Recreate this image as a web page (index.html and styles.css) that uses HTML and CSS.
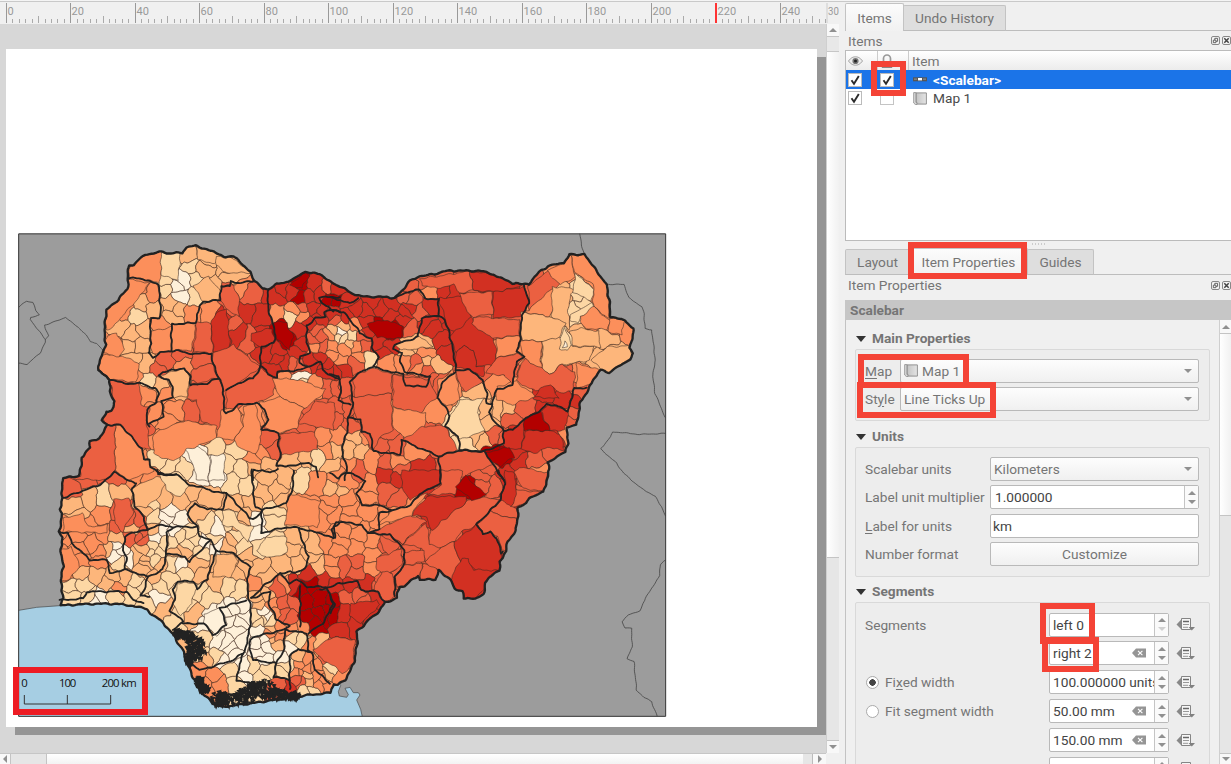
FILE: index.html
```html
<!DOCTYPE html>
<html lang="en">
<head>
<meta charset="utf-8">
<title>Layout</title>
<link rel="stylesheet" href="styles.css">
</head>
<body>
<svg width="0" height="0" class="defs" aria-hidden="true">
  <defs>
    <linearGradient id="paperGrad" x1="0" x2="1"><stop offset="0" stop-color="#c4c4c4"/><stop offset="1" stop-color="#e4e4e4"/></linearGradient>
    <symbol id="i-check" viewBox="0 0 14 14"><rect x=".5" y=".5" width="13" height="13" fill="#fff" stroke="#bbb"/><path d="M3.5 7.2 6 10.7 10.8 3" fill="none" stroke="#2b2b2b" stroke-width="1.9"/></symbol>
    <symbol id="i-box" viewBox="0 0 14 14"><rect x=".5" y=".5" width="13" height="13" fill="#fff" stroke="#c4c4c4"/></symbol>
    <symbol id="i-paper" viewBox="0 0 14 13"><path d="M3 .9h10.4v11.2H3z" fill="url(#paperGrad)" stroke="#888" stroke-width=".9"/><path d="M.7.6h2.2v9.8H4v2H2.2L.7 11z" fill="#ddd" stroke="#888" stroke-width=".8"/></symbol>
    <symbol id="i-scale" viewBox="0 0 14 5"><path d="M0 .3h14v4H0z" fill="#555"/><path d="M5 1h4v2.4H5z" fill="#fff"/><path d="M1 1.4h3v1.4H1zM10 1.4h3v1.4h-3z" fill="#8a8a8a"/></symbol>
    <symbol id="i-over" viewBox="0 0 20 15"><path d="M5.500 2.200.500 7.400l5 5.200z" fill="#888"/><path d="M5.500 1.500h9v11h-9z" fill="#f6f6f6" stroke="#858585"/><path d="M7 4.500h6" stroke="#666" stroke-width="1.500"/><path d="M7 7.500h6M7 10.300h5" stroke="#999"/><path d="M12.500 10h6.500l-3.200 3.400z" fill="#808080"/></symbol>
    <symbol id="i-clear" viewBox="0 0 14 10"><path d="M4 .5h10v9H4L0 5z" fill="#959595"/><path d="m6 2.800 4.400 4.400m0-4.400L6 7.200" stroke="#fff" stroke-width="1.100"/></symbol>
    <symbol id="i-float" viewBox="0 0 9 9"><rect x=".5" y=".5" width="8" height="8" rx="1.500" fill="#f4f4f4" stroke="#888"/><path d="M2.300 4.200h2.600v2.500H2.300zM3.800 4V2.300h2.800v3H5" fill="none" stroke="#555" stroke-width=".9"/></symbol>
    <symbol id="i-close" viewBox="0 0 9 9"><rect x=".5" y=".5" width="8" height="8" rx="1.500" fill="#f4f4f4" stroke="#888"/><path d="m2.300 2.300 4.400 4.400m0-4.400L2.300 6.700" stroke="#444" stroke-width="1.500"/></symbol>
  </defs>
</svg>
<div class="app">
  <div class="canvas-pane">
    <svg class="ruler" id="ruler" width="839" height="22"></svg>
    <div class="view-row">
      <div class="canvas">
        <div class="page">
          <svg class="map" id="map" width="649" height="485" viewBox="54 699 1947 1455"></svg>
        </div>
      </div>
      <div class="vscroll left-vs">
        <div class="sb-btn"><i class="tri up"></i></div>
        <div class="vs-gap"></div><div class="vs-slider"></div><div class="vs-rest"></div>
        <div class="sb-btn"><i class="tri down"></i></div>
      </div>
    </div>
    <div class="hscroll"><div class="h-btn"><i class="tri lft"></i></div><div class="h-gap"></div><div class="h-slider"></div><div class="h-gap2"></div><div class="h-btn r"><i class="tri rgt"></i></div></div>
    <div class="mark m-scale"></div>
  </div>
  <div class="dock">
    <div class="tabs t1"><div class="tab on items">Items</div><div class="tab undo">Undo History</div></div>
    <div class="dock-title">Items<span class="ctl"><svg width="9" height="9"><use href="#i-float"/></svg><svg width="9" height="9"><use href="#i-close"/></svg></span></div>
    <div class="tree">
      <div class="trow head">
        <div class="c1"><svg width="15" height="10" viewBox="0 0 15 10"><path d="M.5 5C3 1.500 5.500.8 7.500.8S12 1.500 14.500 5C12 8.500 9.500 9.200 7.500 9.200S3 8.500.5 5z" fill="#eee" stroke="#999" stroke-width=".9"/><circle cx="7.500" cy="5" r="3.100" fill="#777"/><circle cx="7.500" cy="5" r="1.500" fill="#222"/></svg></div>
        <div class="c2"><svg width="12" height="15" viewBox="0 0 12 15"><path d="M2.500 8V4.500a3.500 3.500 0 0 1 7 0V8" fill="none" stroke="#999" stroke-width="1.700"/><path d="M.8 7.500h10.400V14H.8z" fill="#888"/></svg></div>
        <div class="c3">Item</div>
      </div>
      <div class="trow sel"><div class="c1"><svg width="14" height="14"><use href="#i-check"/></svg></div><div class="c2"><svg width="14" height="14"><use href="#i-check"/></svg></div><div class="c3"><svg width="14" height="5"><use href="#i-scale"/></svg><b>&lt;Scalebar&gt;</b></div></div>
      <div class="trow"><div class="c1"><svg width="14" height="14"><use href="#i-check"/></svg></div><div class="c2"><svg width="14" height="14"><use href="#i-box"/></svg></div><div class="c3"><svg width="14" height="13"><use href="#i-paper"/></svg><span>Map 1</span></div></div>
    </div>
    <div class="splitter"></div>
    <div class="tabs t2"><div class="tab layout">Layout</div><div class="tab on props">Item Properties</div><div class="tab guides">Guides</div></div>
    <div class="dock-title second">Item Properties<span class="ctl"><svg width="9" height="9"><use href="#i-float"/></svg><svg width="9" height="9"><use href="#i-close"/></svg></span></div>
    <div class="banner">Scalebar</div>
    <div class="scrollarea">
      <div class="form">
        <h3>Main Properties</h3>
        <div class="group main">
          <div class="row"><label><u>M</u>ap</label><div class="combo"><svg width="14" height="13"><use href="#i-paper"/></svg><span>Map 1</span><i class="tri down"></i></div></div>
          <div class="row"><label>St<u>y</u>le</label><div class="combo"><span>Line Ticks Up</span><i class="tri down"></i></div></div>
        </div>
        <h3 class="h-units">Units</h3>
        <div class="group units">
          <div class="row"><label>Scalebar units</label><div class="combo"><span>Kilometers</span><i class="tri down"></i></div></div>
          <div class="row"><label>Label unit multiplier</label><div class="spin"><span>1.000000</span><em><i class="tri up"></i><i class="tri down"></i></em></div></div>
          <div class="row"><label><u>L</u>abel for units</label><div class="field">km</div></div>
          <div class="row"><label>Number format</label><div class="button">Customize</div></div>
        </div>
        <h3 class="h-seg">Segments</h3>
        <div class="group seg">
          <div class="row"><label>Segments</label><div class="spin"><span>left 0</span><em><i class="tri up"></i><i class="tri down off"></i></em></div><svg width="20" height="15"><use href="#i-over"/></svg></div>
          <div class="row"><label></label><div class="spin"><span>right 2</span><svg width="14" height="10"><use href="#i-clear"/></svg><em><i class="tri up"></i><i class="tri down"></i></em></div><svg width="20" height="15"><use href="#i-over"/></svg></div>
          <div class="row"><label><i class="radio on"></i>Fi<u>x</u>ed width</label><div class="spin"><span>100.000000 units</span><em><i class="tri up"></i><i class="tri down"></i></em></div><svg width="20" height="15"><use href="#i-over"/></svg></div>
          <div class="row"><label><i class="radio"></i>Fit segment width</label><div class="spin"><span>50.00 mm</span><svg width="14" height="10"><use href="#i-clear"/></svg><em><i class="tri up"></i><i class="tri down"></i></em></div><svg width="20" height="15"><use href="#i-over"/></svg></div>
          <div class="row"><label></label><div class="spin"><span>150.00 mm</span><svg width="14" height="10"><use href="#i-clear"/></svg><em><i class="tri up"></i><i class="tri down"></i></em></div><svg width="20" height="15"><use href="#i-over"/></svg></div>
          <div class="row"><label>Height</label><div class="spin"><span>3.00 mm</span><svg width="14" height="10"><use href="#i-clear"/></svg><em><i class="tri up"></i><i class="tri down"></i></em></div><svg width="20" height="15"><use href="#i-over"/></svg></div>
        </div>
      </div>
      <div class="vscroll right-vs"><div class="sb-btn"><i class="tri up"></i></div><div class="vs-slider"></div><div class="vs-rest"></div><div class="sb-btn low"><i class="tri down"></i></div></div>
    </div>
  </div>
  <div class="mark m-lock"></div><div class="mark m-tab"></div><div class="mark m-map"></div><div class="mark m-style"></div><div class="mark m-left"></div><div class="mark m-right"></div>
</div>
<script src="map.js"></script>
</body>
</html>
```
FILE: styles.css
```css
*{box-sizing:border-box}
body{margin:0;background:#f0f0f0;font-family:Roboto,"Liberation Sans",sans-serif;font-size:13.7px;color:#757575;overflow:hidden}
.defs{position:absolute}
.app{position:relative;display:flex;width:1231px;height:764px;overflow:hidden;border-top:1px solid #f4f4f4}
.app:before{content:"";position:absolute;left:0;top:0;width:100%;height:1px;background:#c9c9c9}
svg{display:block;flex:none}
.canvas-pane{position:relative;width:839px;height:763px;padding-top:1px;display:flex;flex-direction:column;flex:none}
.ruler{overflow:hidden}
.view-row{display:flex;height:729px}
.canvas{width:826px;height:729px;background:#d7d7d7;padding:25px 0 0 6px;overflow:hidden}
.page{width:811px;height:678px;background:#fff;padding:184px 0 0 12px;box-shadow:9px 8px 0 #959595}
.vscroll{width:13px;display:flex;flex-direction:column;border-left:1px solid #cfcfcf;background:#e6e6e6}
.sb-btn{height:13px;display:flex;align-items:center;justify-content:center;background:#f8f8f8;flex:none}
.left-vs .sb-btn:first-child{height:12px}
.vs-gap{height:16px;background:#e8e8e8;border-top:1px solid #c6c6c6;border-bottom:1px solid #c6c6c6}
.left-vs .vs-slider{height:506px}
.vs-slider{background:linear-gradient(90deg,#fff,#f1f1f1);border-bottom:1px solid #c4c4c4}
.vs-rest{flex:1}
.sb-btn:last-child{border-top:1px solid #c4c4c4}
.tri{width:0;height:0;border:4px solid transparent;display:block;flex:none}
.tri.up{border-top:0;border-bottom-color:#909090}
.tri.down{border-bottom:0;border-top-color:#909090}
.tri.lft{border-left:0;border-right-color:#909090}
.tri.rgt{border-right:0;border-left-color:#909090}
.tri.off{opacity:.4}
.hscroll{display:flex;height:11px;width:826px;border-top:1px solid #c6c6c6}
.h-btn{width:11px;display:flex;align-items:center;justify-content:center;background:#f8f8f8;border-right:1px solid #c4c4c4}
.h-btn.r{width:14px;border-left:1px solid #bbb;border-right:0}
.h-gap{width:36px;background:#e6e6e6;border-right:1px solid #c4c4c4}
.h-slider{flex:1;background:linear-gradient(#fff,#f3f3f3)}
.h-gap2{width:9px;background:#e6e6e6}
.dock{width:386px;margin-left:6px;padding-top:2px;display:flex;flex-direction:column;flex:none}
.tabs{display:flex;align-items:flex-end;flex:none}
.tabs:after{content:"";flex:1;border-bottom:1px solid #bdbdbd}
.tab{background:#dedede;border:1px solid #c3c3c3;border-bottom-color:#bdbdbd;border-radius:2px 2px 0 0;display:flex;align-items:center;justify-content:center;margin-left:-1px}
.tab:first-child{margin-left:0}
.tab.on{background:linear-gradient(#fcfcfc,#f1f1f1);border-bottom:0}
.t1{height:28px}
.items{width:59px;height:28px}.undo{width:103px;height:26px}
.dock-title{height:19px;padding:0 3px;display:flex;align-items:center;justify-content:space-between;flex:none}
.ctl{display:flex;gap:2px;margin-right:-3px}
.tree{height:191px;background:#fff;border:1px solid #bbb;border-right:0;flex:none}
.trow{display:flex;height:18px;align-items:center;color:#4a4a4a}
.trow.head{height:20px;background:linear-gradient(#fff,#ececec);border-bottom:1px solid #ccc;color:#757575}
.trow.sel{background:#1b74e8;color:#fff;margin-top:-1px;height:19px}
.c1{width:31px;padding-left:2px}.c2{width:32px;padding-left:3px}
.head .c2{border-left:1px solid #ccc;border-right:1px solid #ccc;height:19px;padding:3px 0 0 3px;overflow:hidden}
.c3{display:flex;align-items:center;gap:6px;padding-left:4px}
.head .c3{padding-left:3px}
.splitter{height:5px;margin:1px 0;background:radial-gradient(circle,#ccc .6px,transparent .8px) 0 0/3px 4px repeat-x;width:14px;align-self:center}
.t2{height:27px}
.layout{width:65px;height:26px}.props{width:119px;height:27px}.guides{width:67px;height:26px}
.second{height:25px;padding-bottom:5px}
.banner{height:20px;background:#c6c6c6;font-weight:700;padding:1px 5px;line-height:18px;flex:none}
.scrollarea{display:flex;height:444px;border-left:1px solid #c3c3c3;overflow:hidden}
.form{width:373px;padding-left:9px}
h3{font-size:13.7px;font-weight:700;margin:0;height:29px;padding:7px 0 0 17px;line-height:22px;position:relative}
h3:before{content:"";position:absolute;left:1px;top:16px;border:5px solid transparent;border-top:6px solid #333;border-bottom:0}
.h-units{height:26px;padding-top:4px}.h-units:before{top:13px}
.h-seg{height:25px;padding-top:3px}.h-seg:before{top:12px}
.group{width:355px;border:1px solid #d9d9d9;background:#ededed;border-radius:2px}
.main{height:72px;padding:9px 10px 0 9px}
.units{height:130px;padding:9px 10px 0 9px}
.seg{height:180px;padding:10px 12px 0 9px}
.row{display:flex;align-items:center;height:23px;margin-bottom:5px}
.row label{width:125px;white-space:nowrap;display:flex;align-items:center}
.main .row label{width:35px}
.units .row{margin-bottom:5.500px}
.seg .row{margin-bottom:5.900px}
.seg .row label{width:184px}
.row u{text-underline-offset:2px;text-decoration-thickness:1px}
.combo,.spin,.field,.button{height:24px;flex:1;border:1px solid #b9b9b9;border-radius:2px;display:flex;align-items:center;background:linear-gradient(#fdfdfd,#f0f0f0);padding-left:4px;gap:4px}
.combo .tri{margin:0 6px 0 auto}
.main .combo{padding-left:3px}
.units .combo{padding-left:3px}
.spin,.field{background:#fff;color:#444}
.field{padding-left:2px}
.button{justify-content:center;padding:0}
.seg .spin{width:120px;flex:none;padding-left:3px;margin-right:7px}
.spin{gap:0}
.spin span{flex:1;white-space:nowrap;overflow:hidden}
.spin>svg{margin-right:8px}
.spin em{width:14px;height:100%;border-left:1px solid #c4c4c4;display:flex;flex-direction:column;align-items:center;justify-content:center;gap:5px;background:#fafafa;flex:none}
.radio{width:13px;height:13px;border:1px solid #aaa;border-radius:50%;background:#fff;margin-right:6px;margin-left:1px}
.radio.on{background:radial-gradient(circle,#444 0 3px,#fff 3.500px)}
.right-vs{width:12px}
.right-vs .vs-slider{height:183px;border-top:1px solid #c4c4c4}
.right-vs .low{height:11px}
.mark{position:absolute;border:6px solid #f44336}
.m-scale{left:13px;top:666px;width:135px;height:48px;border-color:#ed1c24}
.m-lock{left:871px;top:60px;width:35px;height:35px}
.m-tab{left:908px;top:241px;width:119px;height:37px}
.m-map{left:858px;top:353px;width:111px;height:34px}
.m-style{left:857px;top:381px;width:139px;height:36px}
.m-left{left:1040px;top:602px;width:55px;height:41px}
.m-right{left:1042px;top:636px;width:57px;height:35px}
.ruler text{font-size:11px;fill:#999;letter-spacing:.1px}
.map text{font-family:"Open Sans","Noto Sans",sans-serif;font-size:34px;fill:#111}
```
FILE: map.js
```javascript
// Choropleth map: district centres are "x,y,class" in tile units, four tiles make the map.
const colours = ['#fef0d9', '#fdd7a4', '#fdb67b', '#fc8f5b', '#eb6041', '#d23022', '#b30000'];
const tiles = [[0, 660], [990, 660], [0, 1410], [990, 1410]];

const outline = '180,1817 190,1795 183,1745 190,1700 183,1650 188,1610 178,1595 188,1540 180,1530 188,1495 185,1460 190,1434 235,1428 245,1400 243,1372 270,1345 270,1325 300,1315 320,1275 307,1260 318,1233 335,1235 344,1205 330,1175 330,1138 295,1112 305,1060 318,1035 312,1005 318,930 355,900 383,865 385,798 400,793 435,763 490,754 500,759 548,758 560,743 590,737 625,750 680,770 700,770 725,790 750,815 765,842 788,866 805,868 830,850 850,852 880,835 915,816 960,823 985,840 1010,857 1035,865 1055,880 1085,890 1140,891 1185,894 1230,843 1260,828 1300,823 1340,813 1440,813 1485,825 1515,838 1535,852 1547,848 1560,852 1587,855 1602,828 1645,797 1690,788 1710,763 1752,762 1820,855 1828,900 1833,953 1875,960 1900,985 1895,1030 1887,1045 1898,1060 1890,1078 1830,1117 1802,1110 1770,1155 1760,1180 1742,1205 1733,1250 1730,1273 1702,1285 1700,1310 1705,1330 1695,1357 1670,1370 1643,1388 1648,1410 1645,1430 1630,1475 1587,1495 1580,1510 1555,1522 1552,1560 1548,1590 1522,1625 1520,1653 1498,1685 1500,1713 1470,1728 1455,1750 1452,1782 1425,1797 1390,1793 1387,1773 1365,1765 1350,1740 1315,1710 1308,1738 1260,1740 1253,1725 1215,1757 1198,1760 1190,1795 1155,1807 1148,1820 1070,1897 1072,1930 1062,1993 1035,2040 1010,2055 1000,2050 990,2078 920,2085 860,2095 780,2107 665,2120 640,2112 605,2075 580,2035 560,1985 550,1955 520,1905 480,1860 440,1828 400,1818 350,1812 280,1812';

const seeds = [
'435,140,3 510,140,1 560,110,2 570,140,1 620,105,2 690,140,2 700,170,2 710,125,2 625,200,2 590,235,1 530,200,0 548,180,0 542,230,0 495,210,1 495,180,1 605,155,2 590,172,1 510,250,2 535,270,2 520,290,2 575,280,3 360,240,3 420,200,3 460,225,3 430,250,2 410,290,1 460,265,2 370,275,3 360,325,2 395,340,2 430,330,2 340,375,3 385,380,2 430,375,2 350,440,3 400,420,2 440,430,2 400,470,3 450,480,1 480,500,2 480,320,3 480,370,3 550,350,3 630,275,3 690,220,4 720,205,3 690,260,4 750,225,4 670,290,5 735,275,5 790,285,5 605,350,4 655,350,5 700,310,4 720,340,5 745,350,4 785,350,5 700,430,4 740,450,4 500,420,4 470,450,4 545,405,4 550,430,3 600,420,4 610,460,4 630,530,4 600,520,4 530,480,2 545,510,2 500,520,3 440,520,3 370,520,4 380,570,4 420,620,4 465,580,3 520,570,3 500,600,3 580,570,4 630,580,4 550,640,3 620,640,3 480,670,3 690,600,3 680,640,3 730,620,3 760,580,3 750,650,3 800,660,4 760,510,4 700,530,4 790,490,4 290,700,4 300,750,4 380,690,3 370,730,3 420,740,3 480,720,1 510,740,1 550,750,1 590,710,0 650,680,1 650,730,0 710,690,1 690,730,1 720,745,1 760,720,3 790,700,3 760,740,2 800,730,2 820,690,4 830,230,5 850,210,5 905,185,6 870,215,5 900,235,6 940,190,5 960,220,5 980,205,4 930,230,5 1000,240,6 985,245,6 830,280,3 870,290,1 885,270,3 910,290,3 900,260,4 940,265,5 970,270,5 840,325,6 865,360,6 900,330,5 905,370,5 800,400,5 830,395,5 830,420,5 860,430,5 890,400,5 820,445,5 880,430,4 935,420,5 930,310,5 960,300,5 950,330,4 965,350,4 990,340,3 940,360,4 945,385,3 970,380,4 960,410,5 985,430,5 990,460,5 850,480,3 900,470,0 900,490,1 940,500,3 900,440,4 990,500,4 880,540,3 830,540,3 820,580,3 870,590,3 940,590,4 920,610,4 975,570,4 890,665,4 975,650,3 870,715,2 920,705,2 950,710,1 985,690,3',
'25,350,1 28,338,0 40,358,1 10,330,2 40,320,2 65,345,1 60,370,2 10,380,3 40,390,3 30,420,3 80,380,3 100,350,4 100,380,4 20,300,4 50,290,5 75,320,3 90,410,3 10,410,3 120,420,1 20,460,5 40,450,5 80,430,4 20,205,5 60,245,5 10,280,5 75,265,5 110,270,5 125,250,5 155,265,5 180,250,5 180,290,5 230,230,4 240,265,5 230,280,5 270,280,4 220,300,5 300,260,5 285,310,5 305,330,5 145,320,6 180,340,6 200,325,6 240,325,4 105,310,5 110,330,5 145,370,5 180,375,5 160,400,5 165,420,3 245,370,2 290,370,2 230,400,2 290,395,3 255,425,4 225,420,3 290,430,2 320,430,2 290,450,4 270,440,3 330,360,5 345,400,5 240,200,4 245,235,4 300,210,3 290,185,4 340,180,4 390,185,4 340,215,5 370,220,5 350,270,5 390,260,5 380,320,5 440,240,4 450,320,4 450,180,5 500,200,5 540,240,5 540,310,4 500,330,4 440,370,5 400,390,5 420,400,5 430,440,5 530,380,3 520,430,4 500,490,3 460,450,4 420,480,4 620,215,4 700,155,3 790,170,3 640,250,3 690,220,2 755,210,1 770,260,1 740,285,1 620,330,2 690,290,2 800,240,3 790,300,3 745,340,2 705,360,1 660,400,2 605,400,3 690,420,2 760,395,2 850,320,3 890,330,3 835,355,2 850,400,2 760,460,3 800,420,2 620,460,4 700,460,4 560,520,3 650,515,5 700,540,5 750,515,4 740,545,5 500,570,2 530,570,2 580,560,4 540,600,4 650,580,5 620,610,6 560,640,5 600,660,5 680,650,5 690,600,5 725,580,4 720,605,4 705,640,3 530,650,4 670,690,4 480,700,6 520,710,6 550,690,5 570,730,5 610,730,4 615,752,3 530,765,5 130,490,4 130,570,4 240,500,4 300,480,4 330,490,4 230,590,3 310,570,3 165,635,4 100,600,4 150,680,4 200,690,4 280,640,4 250,690,3 320,660,4 200,720,3 360,500,3 410,470,4 440,520,2 430,560,1 470,570,2 390,610,1 420,620,1 480,610,2 410,670,1 460,660,2 440,650,2 490,640,4 10,500,4 50,500,4 20,560,4 60,560,4 70,620,4 10,600,4 20,650,3 80,650,2 105,650,3 60,690,2 90,690,2 15,690,2 10,740,2 60,740,3 80,750,4 125,720,3 170,720,4 210,755,4 270,750,5 400,730,4 360,760,4 470,750,4',
'260,30,4 220,60,4 350,30,4 400,20,3 450,20,3 440,70,2 530,30,1 490,90,2 600,20,0 650,20,0 700,40,1 740,50,1 630,80,2 700,100,2 570,60,2 540,90,2 590,130,2 310,75,1 270,80,2 220,110,2 230,140,2 210,170,3 270,170,3 310,140,3 350,60,2 360,130,4 385,150,4 420,150,4 350,170,4 310,190,3 230,200,3 280,220,3 240,235,3 350,205,2 330,240,2 350,230,0 345,255,0 365,245,0 385,265,0 360,280,1 300,270,3 300,250,3 210,270,3 200,310,3 240,310,2 290,320,2 240,270,3 210,350,1 250,345,1 320,340,2 340,320,2 370,330,2 410,335,1 360,350,3 210,380,1 270,380,1 300,380,0 285,390,0 340,380,1 400,370,1 430,190,4 430,210,4 395,205,4 415,200,4 400,180,2 460,180,2 490,180,0 470,205,0 475,240,1 450,250,1 440,280,2 410,260,2 465,270,1 480,285,2 430,300,2 460,320,2 430,240,2 485,220,1 460,230,1 440,265,2 455,105,1 445,95,1 440,120,2 460,140,1 500,140,0 540,150,0 510,125,0 520,180,0 540,200,1 570,190,1 520,220,1 560,225,1 590,210,1 600,240,1 530,250,2 550,240,2 520,280,1 540,280,0 560,310,1 590,290,2 600,310,2 540,360,1 600,370,1 560,400,1 580,430,2 620,380,1 470,380,0 440,390,1 480,350,1 510,330,1 500,420,2 520,440,1 430,355,1 620,170,1 650,180,0 640,210,1 610,220,0 650,225,0 690,150,1 710,200,1 720,170,2 740,140,2 680,230,2 700,210,2 730,230,1 740,250,2 660,290,2 700,280,2 710,310,2 730,290,2 650,330,2 690,340,1 720,360,1 770,150,0 775,185,0 820,150,1 820,120,1 800,20,2 830,60,2 790,70,2 760,100,2 860,20,2 850,90,2 900,30,1 920,110,3 950,40,3 1000,60,2 990,120,3 960,150,3 780,230,1 820,220,1 870,240,2 890,200,2 780,300,2 850,280,2 900,280,2 940,230,2 980,220,3 950,290,2 1000,280,3 930,260,2 765,340,3 790,320,2 640,440,0 650,460,0 620,470,0 700,420,0 690,450,0 730,410,0 740,440,0 720,460,0 710,480,0 680,430,0 650,510,0 680,520,0 730,510,0 700,550,0 620,500,1 650,560,1 620,570,2 600,550,1 670,570,0 690,535,0 590,540,2 600,600,3 640,620,3 620,650,3 660,640,3 690,600,1 710,640,1 730,590,0 740,620,0 760,590,1 800,600,1 780,620,1 790,570,0 770,520,0 800,530,0 790,510,0 780,545,0 810,490,3 830,520,2 820,510,2 815,480,2 840,480,3 835,500,3 780,480,0 770,440,1 790,430,0 780,455,1 800,440,0 790,445,1 810,450,1 780,400,2 800,380,2 770,380,2 820,400,3 840,360,4 860,350,3 850,400,4 880,400,4 850,430,4 870,440,4 830,430,3 880,350,5 900,360,6 920,400,6 940,340,6 960,390,6 960,430,6 920,440,6 940,460,6 980,430,6 930,310,5 970,330,5 910,470,3 870,480,3 880,500,1 900,510,1 870,540,0 930,530,3 960,530,2 980,550,4 900,560,2 900,590,3 920,570,3 940,590,3 920,610,2 890,610,3 905,605,3 925,595,3 900,640,4 890,630,4 930,640,2 860,590,1 850,610,1 850,560,0 840,640,4 870,650,5 950,620,3 970,630,3 990,610,2 980,650,3 940,660,1 960,645,3 910,660,1',
'20,10,3 50,30,3 25,65,2 10,90,3 50,90,3 10,130,3 60,120,3 60,150,3 120,50,3 170,60,4 200,20,5 170,20,5 210,90,4 110,120,3 110,80,3 160,150,3 200,140,3 240,110,3 270,40,5 350,30,4 420,55,6 340,100,5 310,150,5 390,140,4 300,200,4 240,170,4 200,180,4 350,200,4 440,120,4 460,20,4 460,40,4 495,50,4 530,40,5 540,80,5 590,30,4 590,70,4 520,110,4 520,150,4 530,190,4 500,170,4 440,200,5 460,260,5 480,290,5 400,300,5 430,340,5 360,270,4 340,290,4 290,250,4 250,240,4 250,290,4 220,310,4 300,310,4 170,220,4 180,270,4 160,330,4 30,215,3 40,180,3 90,190,3 80,235,3 130,210,3 20,240,3 80,275,4 120,260,3 125,290,3 40,290,4 80,310,4 10,300,3 105,340,5 150,360,4 20,350,5 60,350,5 10,390,6 10,430,6 50,380,4 90,375,4 100,390,4 140,380,5 40,430,5 90,430,5 70,470,5 40,480,5 110,430,5 30,530,4 50,560,4 5,605,1 30,620,3'];

const districts = [
[['388,138 435,103 490,94 480,190 415,173 388,175', 3], ['485,97 540,99 535,180 483,165', 1], ['590,82 625,90 680,112 645,130 620,125 590,120', 2], ['650,110 690,112 745,150 755,160 670,158 648,135', 2], ['550,680 590,678 630,710 625,780 590,780 575,725', 0], ['635,705 675,703 672,780 625,780', 0], ['590,305 632,310 640,400 580,395', 4], ['632,310 650,280 680,265 685,310 690,390 642,398', 5], ['662,200 700,195 720,240 715,290 680,265 660,240', 4], ['755,340 815,325 825,365 785,385 755,365', 5], ['820,305 860,308 880,350 870,390 825,350', 6], ['452,335 515,320 512,395 455,400', 3], ['318,270 355,240 385,178 450,190 380,275 340,320 318,330', 3], ['320,345 350,340 375,390 355,415 310,400', 3], ['305,405 370,410 420,430 410,485 340,485 297,452', 3], ['680,510 715,490 760,475 780,445 830,475 820,525 770,550 715,555 680,580', 4], ['570,495 655,475 672,510 672,570 655,630 605,600 590,540 560,535', 4], ['815,475 900,480 980,510 940,545 910,565 840,530', 3], ['775,550 840,530 910,565 890,625 837,637 795,625 800,595', 3], ['945,545 1005,550 1000,630 950,620 895,610', 4], ['665,570 715,560 730,620 700,660 650,655', 3], ['730,560 765,550 785,640 770,700 725,690 700,660 730,620', 3], ['460,640 555,600 650,620 650,655 560,690 520,725 460,700', 3], ['640,400 700,375 780,440 715,490 672,515 640,440', 4], ['475,467 555,445 570,480 560,530 520,530 505,480', 2], ['330,478 418,490 425,555 450,565 440,600 450,690 425,685 360,615 320,615 310,590 344,545', 4], ['345,617 365,617 425,685 430,715 450,725 460,755 380,780 345,750', 3], ['190,775 240,770 245,710 270,670 320,617 345,617 345,750 320,780', 4], ['840,640 945,635 955,690 840,705', 4], ['870,195 915,158 930,165 905,205', 6], ['515,312 588,308 575,390 513,390', 3], ['580,200 625,168 662,215 655,240 608,242', 2]],
[['110,310 160,300 215,315 215,355 140,352', 6], ['365,585 390,540 465,535 440,575 465,630 390,660 345,618', 1],
 ['595,200 655,150 690,190 640,235 598,270 597,250', 4], ['650,150 700,130 722,105 735,170 690,195', 3], ['722,105 762,103 830,195 840,295 790,260 790,190 735,160', 3], ['598,270 665,205 675,245 660,290 578,275', 3], ['665,200 735,205 720,230 715,270 720,330 665,290', 2],
 ['735,162 790,205 785,245 730,215', 1], ['720,285 785,250 790,265 750,290 745,310 718,300', 1], ['750,290 790,260 840,300 830,330 770,325 750,305', 3], ['325,235 410,230 425,290 380,340 355,330 345,290', 5], ['425,290 430,310 490,350 500,400 495,435 440,440 430,390 400,375 380,400 358,350', 5], ['380,400 400,375 430,390 440,440 465,440 460,470 420,450 378,440', 5], ['420,155 495,165 583,195 500,215 430,210', 5], ['490,215 583,200 597,250 575,290 490,295', 5], ['390,220 485,215 490,280 430,290 400,260', 4], ['270,175 420,155 430,210 390,220 370,195 320,205 275,195', 4], ['60,530 185,520 188,630 150,650 130,695 95,635 65,550', 4], ['190,465 300,480 320,530 270,580 190,560', 4], ['188,562 285,578 285,625 240,665 190,625', 3], ['220,660 280,620 345,618 385,690 325,710', 4], ['325,480 378,455 390,540 350,560 320,530', 3], ['378,450 420,450 460,485 410,515 390,500', 4],
 ['575,275 660,290 705,310 690,355 640,365 575,360', 2], ['570,360 638,365 630,400 635,450 582,415', 3], ['638,365 690,350 730,380 790,380 780,420 695,435 660,462 635,450', 2], ['720,335 750,325 808,335 810,380 730,378', 2], ['692,355 705,325 725,375 715,390 690,385', 1], ['697,380 703,362 712,382', 0], ['838,297 885,300 875,345 835,335', 3], ['582,415 660,462 695,435 735,455 730,515 690,518 655,497 615,515 558,480', 4], ['740,430 810,450 780,495 740,503', 3], ['500,500 558,482 617,530 545,555 500,540', 3], ['500,355 570,345 562,400 500,415', 3], ['500,415 562,402 580,415 558,440 545,495 525,465 465,460', 4],
 ['520,632 550,630 585,600 575,690 540,685 520,680', 5], ['633,575 655,553 715,573 705,630 660,632', 5], ['585,632 660,632 690,640 705,695 650,680 620,700 575,690', 5], ['583,600 628,572 660,632 582,630', 6], ['325,710 390,693 460,697 500,730 430,755 400,770 333,790', 4], ['465,700 540,680 552,710 510,738 480,720', 6], ['430,290 568,300 570,345 485,355 425,310', 4], ['630,500 660,495 688,535 615,530', 5], ['785,420 830,380 895,378 905,410 840,457 812,450', 2], ['195,375 270,350 310,380 215,390', 2], ['70,465 130,445 187,460 185,520 75,530', 4]],
[['865,70 960,95 955,170 855,165', 3], ['800,200 860,200 860,250 800,265 770,240', 1], ['615,430 660,415 685,460 650,495 610,460', 0], ['535,340 590,340 575,400 540,440 520,400', 1], ['342,90 385,85 400,125 385,150 370,190 345,160', 4], ['395,55 470,20 500,30 480,80 440,110 405,110', 2], ['480,15 530,15 570,45 540,80 500,60', 1], ['190,145 245,130 265,170 320,165 320,190 190,185', 3], ['185,240 215,230 240,290 205,330 185,330', 3], ['670,120 700,125 720,160 760,170 745,215 700,170 665,165', 1], ['650,250 700,255 715,275 690,320 640,320', 2]],
[['333,45 333,0 400,0 378,70 290,75', 4], ['145,165 185,122 240,105 270,75 290,70 240,140', 3], ['300,180 410,95 440,82 508,88 440,165 395,185 370,215 320,238 297,225', 4], ['150,175 240,135 290,155 215,220 180,195 120,190', 4], ['320,238 370,215 395,290 360,330 325,300 285,275', 4], ['215,222 290,160 300,225 330,235 285,275 275,235', 4], ['225,245 280,240 283,275 225,285', 4], ['220,285 280,280 275,300 265,318 225,347 200,350 195,320', 4], ['480,125 510,85 562,115 560,148', 4], ['445,165 480,125 560,148 558,180 530,243 515,240 503,200 480,183 460,195', 4], ['550,10 570,-10 655,10 640,65 580,55', 4], ['545,110 555,60 640,65 597,85 590,100', 4], ['525,0 550,10 560,60 545,110 510,90 525,40', 5], ['150,195 210,225 185,260 160,240', 4], ['140,265 215,235 215,285 170,315 140,300', 4], ['155,305 190,310 195,380 165,395 130,360', 4], ['60,400 140,390 150,405 90,460 60,440', 5],
 ['378,50 405,15 470,78 425,92', 6], ['245,135 290,80 405,80 410,95 305,180 290,140', 5], ['215,0 330,0 333,45 270,70 240,92 215,50', 5], ['370,215 440,165 460,195 480,183 505,210 515,245 510,303 440,308 420,280 395,290', 5], ['360,330 395,265 415,265 430,300 510,303 470,345 435,387 400,383', 5], ['10,500 75,510 70,580 40,610 -20,570 -50,540', 4]]];

const states = [
['385,175 415,173 450,185 475,195 480,240 482,275 478,293 455,296 450,340 455,370 445,400 460,412 480,398 530,390 560,400 600,402 635,400 640,430 655,470 660,480 670,510 672,570 680,583 715,555 770,550 795,570 805,600 783,627 837,637 835,680 843,700 830,735 860,740 880,735 925,730 950,740 955,770', '295,452 330,478 370,490 430,490 465,505 475,520 470,545 440,570 440,600 450,620', '450,610 492,590 485,545 520,530 518,500 505,480 475,467 490,455 555,445 570,470 572,495 620,490 655,475', '765,182 720,190 690,185 690,200 662,198 660,240 610,245 590,280 588,308 515,312 513,390', '805,208 803,260 815,300 828,345 820,370 783,380 780,440 760,475 715,490 680,510', '780,440 800,450 805,465 830,473 835,455 900,450 960,425 970,450 1000,470 1020,480', '920,440 900,430 900,410 930,400 920,370 920,315 950,295 975,290 975,275 1000,270 1020,275', '320,615 360,615 395,650 425,685 430,715 450,720 452,740 475,760 530,765', '760,780 760,750 790,750 810,760 835,745', '1020,232 958,232 965,250 985,262 1000,275'],
['0,232 30,240 60,250 85,235', '0,270 40,275 65,305 90,340 125,355 125,380 145,410 130,440 190,458 220,460 225,495 290,500 300,470 265,462 225,455 210,425 215,400 190,385 195,375 265,350 275,295 325,285 345,300 360,350 375,420 378,450', '195,234 240,213 270,208 285,235 325,238 325,280', '130,443 100,450 60,485 70,550 55,590 90,600 95,635 120,640 130,695 210,703 215,660 260,680 325,710 333,780', '55,590 50,640 35,690 50,740 45,780', '0,460 25,470 35,500 25,540 60,555', '378,455 340,485 320,530 345,560 360,590 345,618 385,650 390,690 460,695 520,670 520,630', '378,450 420,450 460,480 470,520 470,550 487,553 500,510 545,495 555,450 560,425 582,410 562,395 572,350 575,290 597,250 585,210 583,195', '487,553 475,580 495,605 520,630 550,630 585,595 625,575 650,552 690,560 715,573 733,503 770,505', '325,708 390,692 460,695 480,720 500,750 520,780'],
['188,85 240,65 300,45 325,25 345,5 375,28 410,38 395,60 405,110 430,140 440,180 405,185 375,200 370,240 380,260 375,300 330,310 320,270 270,270 215,220 205,190 180,185', '470,0 475,15 530,15 570,45 650,65 680,70 715,105 750,145 760,150 790,120 860,100 880,50 880,0', '755,0 765,110 785,118 785,190 850,172 895,172 990,200 1005,205 1000,170 1020,160', '895,172 910,220 925,260 915,295 885,310 870,305 840,310 795,345 755,385', '680,70 670,118 620,118 585,100 560,130 590,170 600,200 630,210 650,240 640,270 620,330 590,355 580,335 535,335 520,360 525,390 510,420 550,455 520,480', '650,240 700,250 750,290 740,340 745,380 755,430 745,500 730,550 700,570 640,590 600,600 570,580', '440,180 470,165 520,170 500,190 500,240 490,300 445,320 430,360 420,375 450,380', '590,170 520,170', '375,300 445,320', '180,390 250,385 260,365 380,365 400,390 430,400', '550,460 610,460 640,495 680,465 660,415 740,390', '500,250 555,260 570,275 630,210', '755,385 810,365 805,400 830,450 870,465 850,480 760,500 745,520 760,570 830,580 850,540 855,480 920,490 925,540 935,550 895,535 870,560 870,660', '830,580 820,620 870,630', '730,550 715,600 710,630 750,640', '840,310 870,340 890,330 920,350 980,350 1000,400 970,460 925,490', '935,550 945,600 990,640', '900,350 900,470'],
['505,0 525,40 510,90 440,165 460,195 480,183 500,205 515,250 520,245', '330,0 333,40 270,70 240,105 185,122 150,105 95,105 80,70 105,35 70,10 45,10 25,25 0,10', '185,122 145,130 150,175 115,190 95,165 20,155 5,180 10,205', '115,190 180,195 225,240 220,290 195,320 195,380', '-30,360 30,340 80,335 95,360 140,365 165,395', '0,375 15,400 0,430']];

const neighbours = [
'55,922 65,912 80,904 98,908 104,918 108,932 118,945 108,950 92,952 90,958 115,990 136,1020 136,1028 120,1060 95,1080 80,1093 55,1090',
'136,1020 145,1008 137,985 134,975 180,960 198,952 230,980 260,1005 270,1025 290,1030 305,1045 312,1055',
'1738,700 1745,735 1752,762', '1820,853 1873,854 1885,893 1905,905 1925,920 1932,940 1935,985 1955,990 1960,1030 1965,1080 1958,1130 1965,1180 1985,1225 1995,1252',
'1996,1300 1920,1303 1838,1295 1832,1310 1802,1346 1850,1390 1870,1420 1925,1465 1965,1490 1985,1520 1996,1548',
'1996,1680 1982,1695 1978,1725 1960,1760 1935,1795 1920,1832 1885,1845 1867,1865 1875,1883 1895,1885 1896,1940 1882,1977 1902,1985 1910,2070 1930,2092 1955,2105 1965,2135 1972,2150'];

const parse = (s, o = [0, 0]) => s.split(' ').map(p => { const v = p.split(',').map(Number); v[0] += o[0]; v[1] += o[1]; return v; });

function warp([x, y], a) {
  return [x + a * (Math.sin(y / 9.3 + x / 23) + .7 * Math.sin(y / 4.7 - x / 13) + .5 * Math.sin(x / 6.1)),
          y + a * (Math.sin(x / 8.9 - y / 21) + .7 * Math.sin(x / 4.3 + y / 12) + .5 * Math.sin(y / 5.7))];
}
function trace(pts, closed, a) {
  const out = [], n = pts.length;
  for (let i = 0; i < (closed ? n : n - 1); i++) {
    const p = pts[i], q = pts[(i + 1) % n], k = Math.max(1, Math.round(Math.hypot(q[0] - p[0], q[1] - p[1]) / 6));
    for (let j = 0; j < k; j++) out.push(warp([p[0] + (q[0] - p[0]) * j / k, p[1] + (q[1] - p[1]) * j / k], a));
  }
  if (!closed) out.push(warp(pts[n - 1], a));
  return 'M' + out.map(p => p[0].toFixed(1) + ' ' + p[1].toFixed(1)).join('L') + (closed ? 'Z' : '');
}
function cell(s, all) {
  let poly = [[s[0] - 160, s[1] - 160], [s[0] + 160, s[1] - 160], [s[0] + 160, s[1] + 160], [s[0] - 160, s[1] + 160]];
  for (const t of all) {
    if (t === s || Math.abs(t[0] - s[0]) > 320 || Math.abs(t[1] - s[1]) > 320) continue;
    const mx = (s[0] + t[0]) / 2, my = (s[1] + t[1]) / 2, dx = t[0] - s[0], dy = t[1] - s[1];
    const side = p => (p[0] - mx) * dx + (p[1] - my) * dy, next = [];
    poly.forEach((p, i) => {
      const q = poly[(i + 1) % poly.length], a = side(p), b = side(q);
      if (a <= 0) next.push(p);
      if ((a < 0 && b > 0) || (a > 0 && b < 0)) { const r = a / (a - b); next.push([p[0] + (q[0] - p[0]) * r, p[1] + (q[1] - p[1]) * r]); }
    });
    poly = next;
  }
  return poly;
}

const country = trace(parse(outline), true, 1.5);
let svg = `<defs><clipPath id="frame"><path d="M56 701H1997V2149H56z"/></clipPath><clipPath id="land"><path d="${country}"/></clipPath></defs><g clip-path="url(#frame)"><path d="M54 699H2000V2152H54z" fill="#9c9c9c"/>`;
svg += '<path d="M50 1832 110 1822 180 1817 300 1780 500 1800 700 2000 1010 2040 1022 2056 1015 2075 1018 2088 1040 2092 1045 2084 1035 2065 1050 2062 1060 2078 1075 2078 1080 2085 1070 2100 1082 2128 1088 2155H50z" fill="#a6cee3" stroke="#444" stroke-width="2"/>';
neighbours.forEach(n => { svg += `<path d="${trace(parse(n), false, .8)}" fill="none" stroke="#444" stroke-width="2.400"/>`; });
svg += `<g clip-path="url(#land)" stroke="#3a2a22" stroke-opacity=".75" stroke-width="2.200" stroke-linejoin="round"><path d="${country}" fill="${colours[3]}"/>`;
const all = seeds.flatMap((s, i) => parse(s, tiles[i]));
all.forEach(s => { const c = cell(s, all); if (c.length) svg += `<path d="${trace(c, true, 3.2)}" fill="${colours[s[2]]}"/>`; });
districts.forEach((list, i) => list.forEach(([p, c]) => { svg += `<path d="${trace(parse(p, tiles[i]), true, 1.8)}" fill="${colours[c]}"/>`; }));
svg += '</g><g fill="none" stroke="#222" stroke-linejoin="round" stroke-linecap="round">';
states.forEach((list, i) => list.forEach(p => { svg += `<path d="${trace(parse(p, tiles[i]), false, 1.5)}" stroke-width="5.500"/>`; }));
svg += `<path d="${country}" stroke-width="7"/></g>`;

// River delta: a mass of tiny islands along the coast.
const delta = [[535, 1900, 14, 12], [560, 1905, 24, 12], [585, 1932, 28, 25], [590, 1955, 26, 24], [568, 1975, 12, 20], [598, 2045, 12, 16], [612, 2065, 16, 12], [660, 2095, 28, 24], [690, 2098, 36, 20], [740, 2085, 32, 24], [765, 2065, 25, 22], [795, 2065, 36, 26], [830, 2080, 30, 16], [870, 2085, 30, 12]];
let r = 7;
const rnd = () => (r = (r * 16807) % 2147483647) / 2147483647;
delta.forEach(([x, y, rx, ry]) => {
  let d = '';
  for (let k = 0; k < 80; k++) {
    const a = rnd() * 6.283, m = Math.sqrt(rnd());
    const px = x + Math.cos(a) * m * rx, py = y + Math.sin(a) * m * ry, w = 3 + rnd() * 4;
    d += `M${(px - 3).toFixed(1)} ${py.toFixed(1)}l${w.toFixed(1)} ${(rnd() * 6 - 3).toFixed(1)} ${(rnd() * 4 - 4).toFixed(1)} ${w.toFixed(1)}z`;
  }
  svg += `<path d="${d}" fill="#222" stroke="#222" stroke-width="4"/>`;
});
svg += '<g stroke="#333" stroke-width="3" fill="none"><path d="M73 2085V2112H332V2085M202 2085V2112"/></g><text x="64" y="2062">0</text><text x="177" y="2062" textLength="52">100</text><text x="305" y="2062" textLength="105">200 km</text></g><path d="M56 701.500H1997V2149H56z" fill="none" stroke="#333" stroke-width="3"/>';
document.getElementById('map').innerHTML = svg;

let ticks = '<path d="M0 21.500H826" stroke="#f0f0f0"/>';
for (let v = 0; v < 256; v += 2) {
  const x = 6.300 + v * 3.226, h = v % 20 === 0 ? 20 : v % 10 === 0 ? 7 : 4;
  ticks += `<path d="M${Math.floor(x) + .5} ${21 - h}V21" stroke="${v % 20 ? '#aaa' : '#999'}"/>`;
  if (v % 20 === 0) ticks += `<text x="${Math.floor(x) + 1.500}" y="12.500">${v}</text>`;
}
ticks += '<path d="M827 1V21" stroke="#ccc"/><text x="828" y="12.500" textLength="11" lengthAdjust="spacingAndGlyphs">30</text><path d="M716 1V21" stroke="#f33" stroke-width="2"/>';
document.getElementById('ruler').innerHTML = ticks;
```
